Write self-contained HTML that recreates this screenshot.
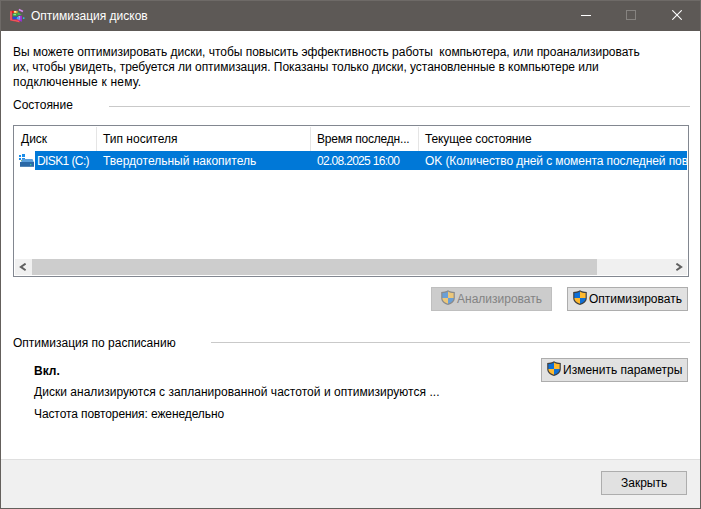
<!DOCTYPE html>
<html><head><meta charset="utf-8">
<style>
*{margin:0;padding:0;box-sizing:border-box}
html,body{width:701px;height:509px;overflow:hidden;background:#fff}
body{position:relative;font-family:"Liberation Sans",sans-serif;font-size:12px;color:#000}
.a{position:absolute;white-space:pre;line-height:15px}
.bd{position:absolute;background:#64605c}
#title{position:absolute;left:0;top:0;width:701px;height:31px;background:#5d5956;border:1px solid #6e6a67;border-bottom:none}
.sep{position:absolute;height:1px;background:#c9c9c9}
.list{position:absolute;left:13px;top:125px;width:676px;height:152px;border:1px solid #828790;background:#fff;overflow:hidden}
.hsep{position:absolute;top:1px;width:1px;height:24px;background:#e5e5e5}
.btn{position:absolute;border:1px solid #adadad;background:#e1e1e1}
.btn.dis{border-color:#bfbfbf;background:#cccccc;color:#838383}
#footer{position:absolute;left:1px;top:459px;width:699px;height:49px;background:#f0f0f0;border-top:1px solid #dfdfdf}
</style></head><body>

<div id="title"></div>
<div class="bd" style="left:0;top:31px;width:1px;height:478px"></div>
<div class="bd" style="left:700px;top:31px;width:1px;height:478px"></div>
<div class="bd" style="left:0;top:508px;width:701px;height:1px"></div>

<!-- app icon -->
<svg style="position:absolute;left:8px;top:7px" width="18" height="18" viewBox="0 0 18 18">
  <path d="M2 3.8 L4.3 3.8 L4.3 11.6 L11.8 12.6 L11.8 15.6 L2 13.6 Z" fill="#e0393f"/>
  <path d="M2.5 4.5 L3.5 4.5 L3.5 12.8 L11 14 L11 14.8 L2.5 13 Z" fill="#f07078"/>
  <rect x="4" y="3.8" width="2.2" height="2.3" fill="#e01818"/>
  <rect x="5.8" y="3.9" width="3.8" height="2.6" fill="#e8a838"/>
  <rect x="6.2" y="4.1" width="1.8" height="1.4" fill="#fff0b0"/>
  <rect x="4.8" y="6.5" width="4.8" height="2.8" fill="#34a844"/>
  <rect x="5.5" y="7" width="2.5" height="1.2" fill="#90e090"/>
  <path d="M9.7 5 L13.9 8.1 L9.7 8.1 Z" fill="#40c050"/>
  <rect x="4.6" y="9.7" width="4.4" height="2.7" fill="#2848d8"/>
  <path d="M10.2 8.7 L13.9 8.7 L13.9 14.8 L10.2 13.6 Z" fill="#9a30d8"/>
  <rect x="10.6" y="9" width="1.5" height="3.5" fill="#e0a0f8"/>
  <circle cx="10.2" cy="11.2" r="1.4" fill="#48a8f0"/>
  <path d="M11.2 1.8 L15.3 3.8 L14.6 5.2 L10.5 3.2 Z" fill="#d888f0"/>
  <circle cx="15.7" cy="11.1" r="0.9" fill="#38c0e8"/>
</svg>
<div class="a" style="left:31px;top:9px;color:#fff">Оптимизация дисков</div>

<!-- caption buttons -->
<div style="position:absolute;left:581px;top:15px;width:10px;height:1px;background:#fff"></div>
<div style="position:absolute;left:626px;top:10px;width:10px;height:10px;border:1px solid #868380"></div>
<svg style="position:absolute;left:672px;top:10px" width="10" height="10" viewBox="0 0 10 10">
  <path d="M0.3 0.3 L9.7 9.7 M9.7 0.3 L0.3 9.7" stroke="#fff" stroke-width="1.1"/>
</svg>

<div class="a" style="left:13px;top:45px;letter-spacing:-0.02px">Вы можете оптимизировать диски, чтобы повысить эффективность работы  компьютера, или проанализировать</div>
<div class="a" style="left:13px;top:60px;letter-spacing:-0.03px">их, чтобы увидеть, требуется ли оптимизация. Показаны только диски, установленные в компьютере или</div>
<div class="a" style="left:13px;top:75px;letter-spacing:0.2px">подключенные к нему.</div>

<div class="a" style="left:13px;top:98px">Состояние</div>
<div class="sep" style="left:109px;top:106px;width:581px"></div>

<div class="list">
  <div class="hsep" style="left:82px"></div>
  <div class="hsep" style="left:296px"></div>
  <div class="hsep" style="left:404px"></div>
  <div class="a" style="left:7px;top:6px">Диск</div>
  <div class="a" style="left:89px;top:6px">Тип носителя</div>
  <div class="a" style="left:303px;top:6px;letter-spacing:-0.2px">Время последн...</div>
  <div class="a" style="left:411px;top:6px;letter-spacing:-0.12px">Текущее состояние</div>
  <svg style="position:absolute;left:5px;top:28px" width="16" height="14" viewBox="0 0 16 14">
    <rect x="0" y="1" width="2" height="2" fill="#1a8ce8"/>
    <rect x="3" y="0" width="3" height="3" fill="#1a8ce8"/>
    <rect x="0" y="4" width="2" height="2" fill="#1a8ce8"/>
    <rect x="3" y="4" width="3" height="3" fill="#1a8ce8"/>
    <rect x="2" y="6" width="1" height="1" fill="#8cc43a"/>
    <path d="M2 8.5 L3 5 L13.5 5 L15 8.5 Z" fill="#5b9fdc"/>
    <rect x="1" y="8" width="14" height="4.8" fill="#2b68a6"/>
    <rect x="11" y="10" width="1.3" height="1.3" fill="#35d0a0"/>
  </svg>
  <div style="position:absolute;left:21px;top:25px;width:652px;height:19px;background:#0078d7"></div>
  <div class="a" style="left:23px;top:28px;color:#fff;letter-spacing:-0.6px">DISK1 (C:)</div>
  <div class="a" style="left:89px;top:28px;color:#fff">Твердотельный накопитель</div>
  <div class="a" style="left:303px;top:28px;color:#fff;letter-spacing:-0.7px">02.08.2025 16:00</div>
  <div class="a" style="left:411px;top:28px;color:#fff;letter-spacing:-0.08px">OK (Количество дней с момента последней повторной оптимизации: 0)</div>
  <!-- h scrollbar -->
  <div style="position:absolute;left:1px;top:133px;width:672px;height:16px;background:#f0f0f0"></div>
  <div style="position:absolute;left:18px;top:133px;width:565px;height:16px;background:#cdcdcd"></div>
  <svg style="position:absolute;left:5px;top:137px" width="8" height="8" viewBox="0 0 8 8"><path d="M6.6 0.6 L1.8 3.9 L6.6 7.2" stroke="#606060" stroke-width="1.9" fill="none"/></svg>
  <svg style="position:absolute;left:661px;top:137px" width="8" height="8" viewBox="0 0 8 8"><path d="M1.4 0.6 L6.2 3.9 L1.4 7.2" stroke="#606060" stroke-width="1.9" fill="none"/></svg>
</div>

<div class="btn dis" style="left:431px;top:287px;width:121px;height:24px"></div>
<svg style="position:absolute;left:441px;top:290px" width="14" height="15" viewBox="0 0 14 15">
  <defs><clipPath id="c441"><path d="M7 1.5 C8.7 2.5 10.6 3 12.6 3 L12.6 8 C12.6 10.9 10.1 12.7 7 13.7 C3.9 12.7 1.4 10.9 1.4 8 L1.4 3 C3.4 3 5.3 2.5 7 1.5 Z"/></clipPath></defs>
  <path d="M7 0.2 C9 1.3 11.2 1.9 13.8 1.9 L13.8 8 C13.8 11.8 10.8 13.9 7 15 C3.2 13.9 0.2 11.8 0.2 8 L0.2 1.9 C2.8 1.9 5 1.3 7 0.2 Z" fill="#8a8a8a"/>
  <g clip-path="url(#c441)"><rect x="0" y="0" width="7" height="8" fill="#6a9fd6"/><rect x="7" y="0" width="7" height="8" fill="#ecc77a"/><rect x="0" y="8" width="7" height="8" fill="#ecc77a"/><rect x="7" y="8" width="7" height="8" fill="#6a9fd6"/></g>
</svg>
<div class="a" style="left:457px;top:292px;color:#838383">Анализировать</div>
<div class="btn" style="left:567px;top:287px;width:121px;height:24px"></div>
<svg style="position:absolute;left:573px;top:290px" width="14" height="15" viewBox="0 0 14 15">
  <defs><clipPath id="c573"><path d="M7 1.5 C8.7 2.5 10.6 3 12.6 3 L12.6 8 C12.6 10.9 10.1 12.7 7 13.7 C3.9 12.7 1.4 10.9 1.4 8 L1.4 3 C3.4 3 5.3 2.5 7 1.5 Z"/></clipPath></defs>
  <path d="M7 0.2 C9 1.3 11.2 1.9 13.8 1.9 L13.8 8 C13.8 11.8 10.8 13.9 7 15 C3.2 13.9 0.2 11.8 0.2 8 L0.2 1.9 C2.8 1.9 5 1.3 7 0.2 Z" fill="#404040"/>
  <g clip-path="url(#c573)"><rect x="0" y="0" width="7" height="8" fill="#0e6fd6"/><rect x="7" y="0" width="7" height="8" fill="#ffb92e"/><rect x="0" y="8" width="7" height="8" fill="#ffb92e"/><rect x="7" y="8" width="7" height="8" fill="#0e6fd6"/></g>
</svg>
<div class="a" style="left:589px;top:292px">Оптимизировать</div>

<div class="a" style="left:13px;top:336px">Оптимизация по расписанию</div>
<div class="sep" style="left:211px;top:342px;width:479px"></div>
<div class="a" style="left:34px;top:364px;font-weight:bold">Вкл.</div>
<div class="a" style="left:34px;top:385px;letter-spacing:0.03px">Диски анализируются с запланированной частотой и оптимизируются ...</div>
<div class="a" style="left:34px;top:407px;letter-spacing:-0.1px">Частота повторения: еженедельно</div>

<div class="btn" style="left:541px;top:358px;width:147px;height:24px"></div>
<svg style="position:absolute;left:547px;top:361px" width="14" height="15" viewBox="0 0 14 15">
  <defs><clipPath id="c547"><path d="M7 1.5 C8.7 2.5 10.6 3 12.6 3 L12.6 8 C12.6 10.9 10.1 12.7 7 13.7 C3.9 12.7 1.4 10.9 1.4 8 L1.4 3 C3.4 3 5.3 2.5 7 1.5 Z"/></clipPath></defs>
  <path d="M7 0.2 C9 1.3 11.2 1.9 13.8 1.9 L13.8 8 C13.8 11.8 10.8 13.9 7 15 C3.2 13.9 0.2 11.8 0.2 8 L0.2 1.9 C2.8 1.9 5 1.3 7 0.2 Z" fill="#404040"/>
  <g clip-path="url(#c547)"><rect x="0" y="0" width="7" height="8" fill="#0e6fd6"/><rect x="7" y="0" width="7" height="8" fill="#ffb92e"/><rect x="0" y="8" width="7" height="8" fill="#ffb92e"/><rect x="7" y="8" width="7" height="8" fill="#0e6fd6"/></g>
</svg>
<div class="a" style="left:563px;top:363px">Изменить параметры</div>

<div id="footer"></div>
<div class="btn" style="left:601px;top:471px;width:86px;height:24px"></div>
<div class="a" style="left:621px;top:476px">Закрыть</div>

</body></html>
